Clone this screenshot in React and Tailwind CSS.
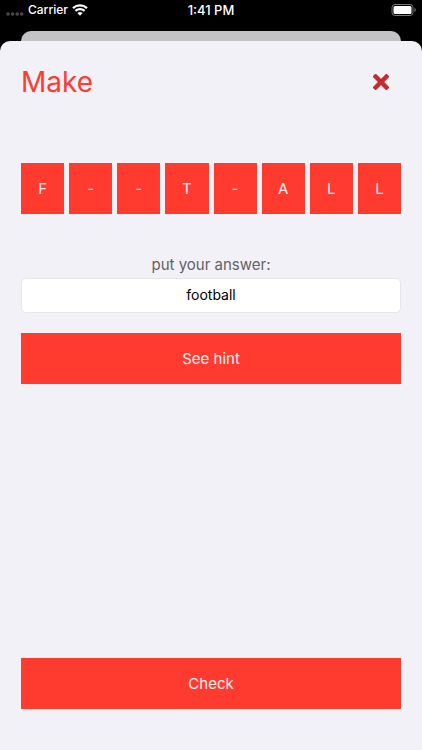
import React, { useState } from 'react';

const letters = ['F', '-', '-', 'T', '-', 'A', 'L', 'L'];

const StatusBar = () => (
  <div className="grid h-[31px] grid-cols-3 items-start px-[6px] text-[13px] font-medium leading-5 text-white">
    <div className="flex items-center">
      <svg width="18" height="4" viewBox="0 0 18 4" className="mt-2" fill="#4a4a4a" aria-hidden="true">
        <circle cx="2" cy="2" r="1.8" />
        <circle cx="6.6" cy="2" r="1.8" />
        <circle cx="11.2" cy="2" r="1.8" />
        <circle cx="15.8" cy="2" r="1.8" />
      </svg>
      <span className="ml-1 text-[12px] leading-5">Carrier</span>
      <svg width="16" height="12" viewBox="0 0 16 12" className="ml-1" fill="none" aria-hidden="true">
        <path d="M1 4.1C4.9 0.4 11.1 0.4 15 4.1" stroke="#fff" strokeWidth="2.3" />
        <path d="M3.5 6.9C6 4.5 10 4.5 12.5 6.9" stroke="#fff" strokeWidth="2.3" />
        <path d="M5.4 9C7 7.6 9 7.6 10.6 9L8 11.8Z" fill="#fff" />
      </svg>
    </div>
    <span className="text-center">1:41 PM</span>
    <svg width="26" height="12" viewBox="0 0 26 12" className="mt-1 justify-self-end" fill="none" aria-hidden="true">
      <rect x="2" y="0.5" width="21" height="11" rx="3" stroke="#777" />
      <rect x="3.5" y="2" width="18" height="8" rx="1.5" fill="#fff" />
      <path d="M24.5 4V8C26.2 7.3 26.2 4.7 24.5 4Z" fill="#777" />
    </svg>
  </div>
);

const ActionButton = ({ children }) => (
  <button type="button" className="h-[51px] w-full bg-[#ff3b30] pt-[2px] text-[15px] text-[#f2f1f7]">
    {children}
  </button>
);

const App = () => {
  const [answer, setAnswer] = useState('football');

  return (
    <div className="flex min-h-screen flex-col bg-black font-['Inter',sans-serif]">
      <StatusBar />
      {/* card that peeks out behind the sheet */}
      <div className="mx-[21px] h-[10px] rounded-t-[10px] bg-[#c3c3c5]" />

      <main className="flex flex-1 flex-col rounded-t-[10px] bg-[#f2f1f7] px-[21px] pb-[41px] pt-[21px]">
        <header className="flex h-10 items-center justify-between">
          <h1 className="text-[28px] leading-10 text-[#ff3b30]">Make</h1>
          <button type="button" aria-label="Close" className="mr-3">
            <svg width="16" height="16" viewBox="0 0 16 16" aria-hidden="true">
              <path d="M2.6 2.6L13.4 13.4M13.4 2.6L2.6 13.4" stroke="#c62a2c" strokeWidth="4.4" strokeLinecap="square" strokeLinejoin="round" />
            </svg>
          </button>
        </header>

        <div className="mt-[61px] grid grid-cols-8 gap-[5px]">
          {letters.map((letter, index) => (
            <div
              key={index}
              className="flex h-[51px] items-center justify-center bg-[#ff3b30] pt-[2px] text-[15px] text-[#f2f1f7]"
            >
              {letter}
            </div>
          ))}
        </div>

        <label htmlFor="answer" className="mt-[41px] text-center text-[15px] leading-5 text-[#626166]">
          put your answer:
        </label>
        <input
          id="answer"
          type="text"
          value={answer}
          onChange={(e) => setAnswer(e.target.value)}
          className="mb-5 mt-[3px] h-[35px] w-full rounded-[5px] border border-[#e6e5ea] bg-white pb-[2px] text-center text-[14px] text-black outline-none"
        />
        <ActionButton>See hint</ActionButton>

        <div className="mt-auto">
          <ActionButton>Check</ActionButton>
        </div>
      </main>
    </div>
  );
};

export default App;
